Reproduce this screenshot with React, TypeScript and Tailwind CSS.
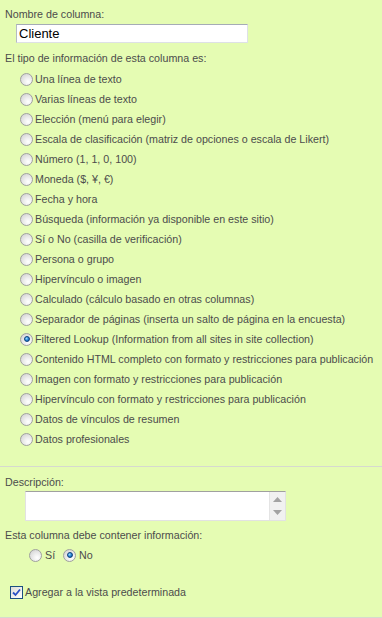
import React from "react";

const options: { label: string; checked?: boolean }[] = [
  { label: "Una línea de texto" },
  { label: "Varias líneas de texto" },
  { label: "Elección (menú para elegir)" },
  { label: "Escala de clasificación (matriz de opciones o escala de Likert)" },
  { label: "Número (1, 1, 0, 100)" },
  { label: "Moneda ($, ¥, €)" },
  { label: "Fecha y hora" },
  { label: "Búsqueda (información ya disponible en este sitio)" },
  { label: "Sí o No (casilla de verificación)" },
  { label: "Persona o grupo" },
  { label: "Hipervínculo o imagen" },
  { label: "Calculado (cálculo basado en otras columnas)" },
  { label: "Separador de páginas (inserta un salto de página en la encuesta)" },
  { label: "Filtered Lookup (Information from all sites in site collection)", checked: true },
  { label: "Contenido HTML completo con formato y restricciones para publicación" },
  { label: "Imagen con formato y restricciones para publicación" },
  { label: "Hipervínculo con formato y restricciones para publicación" },
  { label: "Datos de vínculos de resumen" },
  { label: "Datos profesionales" },
];

function Radio({ checked }: { checked?: boolean }) {
  return (
    <span className="relative inline-block w-[13px] h-[13px] shrink-0 rounded-full border border-[#a0a0a0] bg-[radial-gradient(circle_at_65%_70%,#ffffff_0%,#efefef_35%,#cccccc_100%)]">
      {checked && (
        <span className="absolute left-[2.5px] top-[2.5px] w-[6px] h-[6px] rounded-full border border-[#0b3f7a] bg-[radial-gradient(circle_at_35%_35%,#9fe0ff_0%,#2a8ad8_50%,#0a4a94_100%)]" />
      )}
    </span>
  );
}

export default function App() {
  return (
    <div className="w-[382px] h-[618px] bg-[#e5fcb3] text-[10.7px] text-[#4c4c4c] font-['Liberation_Sans',Arial,sans-serif] flex flex-col overflow-hidden">
      <div className="pl-[5px] pt-[7px] leading-[14px]">Nombre de columna:</div>
      <div className="ml-[16px] mt-[3px] w-[232px] h-[19px] bg-white border border-t-[#a5acb5] border-l-[#b5bbc3] border-r-[#dee1e6] border-b-[#dee1e6] text-[13px] text-black pl-[2px] leading-[17px]">
        Cliente
      </div>
      <div className="pl-[5px] mt-[8px] leading-[14px]">El tipo de información de esta columna es:</div>
      <div className="mt-[4px] flex flex-col">
        {options.map((o) => (
          <div key={o.label} className="h-[20px] flex items-center pl-[20px] gap-[2px] whitespace-nowrap">
            <Radio checked={o.checked} />
            <span className="leading-[14px]">{o.label}</span>
          </div>
        ))}
      </div>
      <div className="mt-[17px] h-px bg-[#d6d9cf]" />
      <div className="pl-[5px] mt-[8px] leading-[14px]">Descripción:</div>
      <div className="ml-[25px] mt-[2px] w-[261px] h-[30px] flex bg-white border border-t-[#a0a0a0] border-l-[#e2e2e2] border-r-[#e2e2e2] border-b-[#e2e2e2]">
        <div className="flex-1" />
        <div className="w-[16px] h-full bg-[#f1f1f1] border-l border-[#e4e4e4] flex flex-col items-center justify-between py-[5px]">
          <svg width="9" height="5" viewBox="0 0 9 5">
            <path d="M4.5 0 L9 5 L0 5 Z" fill="#a3a3a3" />
          </svg>
          <svg width="9" height="5" viewBox="0 0 9 5">
            <path d="M0 0 L9 0 L4.5 5 Z" fill="#a3a3a3" />
          </svg>
        </div>
      </div>
      <div className="pl-[5px] mt-[7px] leading-[14px]">Esta columna debe contener información:</div>
      <div className="mt-[5px] h-[16px] flex items-center pl-[29px]">
        <Radio />
        <span className="ml-[3px] leading-[14px]">Sí</span>
        <span className="ml-[8px]" />
        <Radio checked />
        <span className="ml-[3px] leading-[14px]">No</span>
      </div>
      <div className="mt-[21px] h-[16px] flex items-center pl-[10px]">
        <span className="relative inline-block w-[13px] h-[13px] shrink-0 border border-[#1c5180] bg-[linear-gradient(135deg,#dcdcd7_0%,#ffffff_100%)]">
          <svg className="absolute left-[1px] top-[1px]" width="9" height="9" viewBox="0 0 9 9">
            <path d="M1 4.5 L3.5 7 L8 1.5" stroke="#2a4fc4" strokeWidth="1.8" fill="none" />
          </svg>
        </span>
        <span className="ml-[2px] leading-[14px]">Agregar a la vista predeterminada</span>
      </div>
      <div className="mt-auto h-px bg-[#d6d9cf]" />
    </div>
  );
}
